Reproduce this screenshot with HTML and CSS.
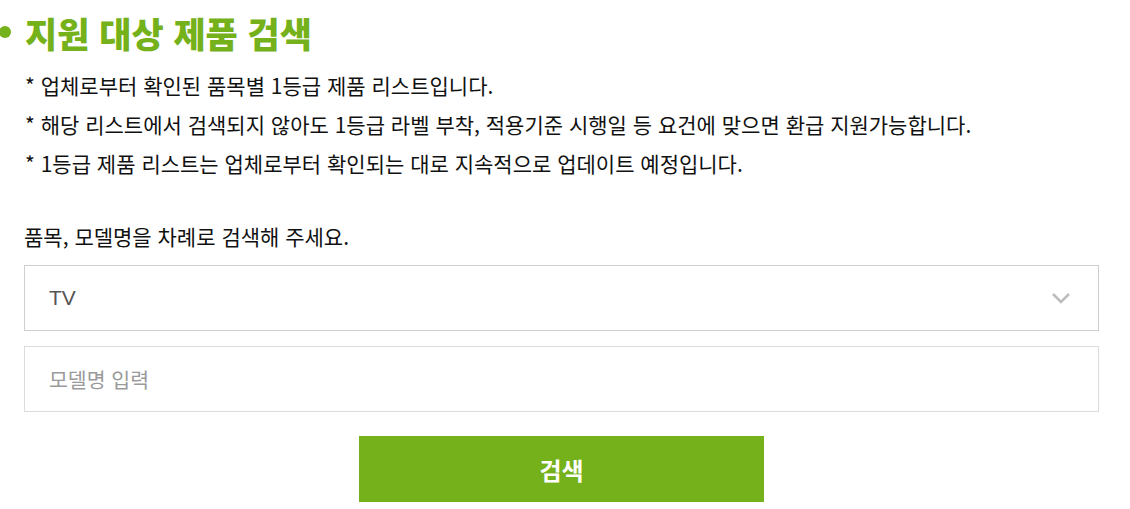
FILE: index.html
```html
<!DOCTYPE html>
<html lang="ko">
<head>
<meta charset="utf-8">
<link rel="stylesheet" href="styles.css">
</head>
<body>
<div class="page">
  <h2 class="title"><span class="dot"></span>지원 대상 제품 검색</h2>
  <ul class="notes">
    <li>* 업체로부터 확인된 품목별 1등급 제품 리스트입니다.</li>
    <li>* 해당 리스트에서 검색되지 않아도 1등급 라벨 부착, 적용기준 시행일 등 요건에 맞으면 환급 지원가능합니다.</li>
    <li>* 1등급 제품 리스트는 업체로부터 확인되는 대로 지속적으로 업데이트 예정입니다.</li>
  </ul>
  <p class="guide">품목, 모델명을 차례로 검색해 주세요.</p>
  <div class="field select">
    <span class="value">TV</span>
    <svg class="chev" width="20" height="12" viewBox="0 0 20 12"><path d="M2 2 L10 10 L18 2" fill="none" stroke="#bdbdbd" stroke-width="2.6"/></svg>
  </div>
  <div class="field input">
    <span class="placeholder">모델명 입력</span>
  </div>
  <div class="actions">
    <button class="btn">검색</button>
  </div>
</div>
</body>
</html>
```
FILE: styles.css
```css
html, body { margin: 0; padding: 0; background: #fff; }
body { font-family: "Noto Sans CJK KR", "Noto Sans", sans-serif; color: #111; }
.page { padding: 0 31px 0 24px; }
.title {
  margin: 0 0 0 -24px; padding-top: 9px; height: 48px;
  display: flex; align-items: center;
  font-size: 35px; font-weight: 800; color: #74b11a;
  line-height: 48px;
}
.dot { width: 12px; height: 12px; border-radius: 50%; background: #74b11a; margin: 0 14px 2px -1px; }
.notes { list-style: none; margin: 9px 0 0; padding: 0 0 0 1px; }
.notes li { font-size: 21px; line-height: 39px; }
.guide { margin: 40px 0 0; font-size: 21px; line-height: 26px; }
.field {
  box-sizing: border-box; height: 66px; border: 1px solid #cfcfcf;
  display: flex; align-items: center; padding: 0 24px;
}
.select { margin-top: 16px; justify-content: space-between; }
.select .value { font-family: "Liberation Sans", Arial, sans-serif; font-size: 21px; color: #555; }
.chev { margin-right: 3px; }
.input { margin-top: 15px; border-color: #dcdcdc; }
.placeholder { font-size: 20.5px; color: #9a9a9a; }
.actions { display: flex; justify-content: center; margin-top: 24px; }
.btn {
  width: 405px; height: 66px; border: 0; background: #74b11a; color: #fff;
  font-family: "Noto Sans CJK KR", sans-serif; font-size: 24px; font-weight: 700;
  padding: 0;
}
```
